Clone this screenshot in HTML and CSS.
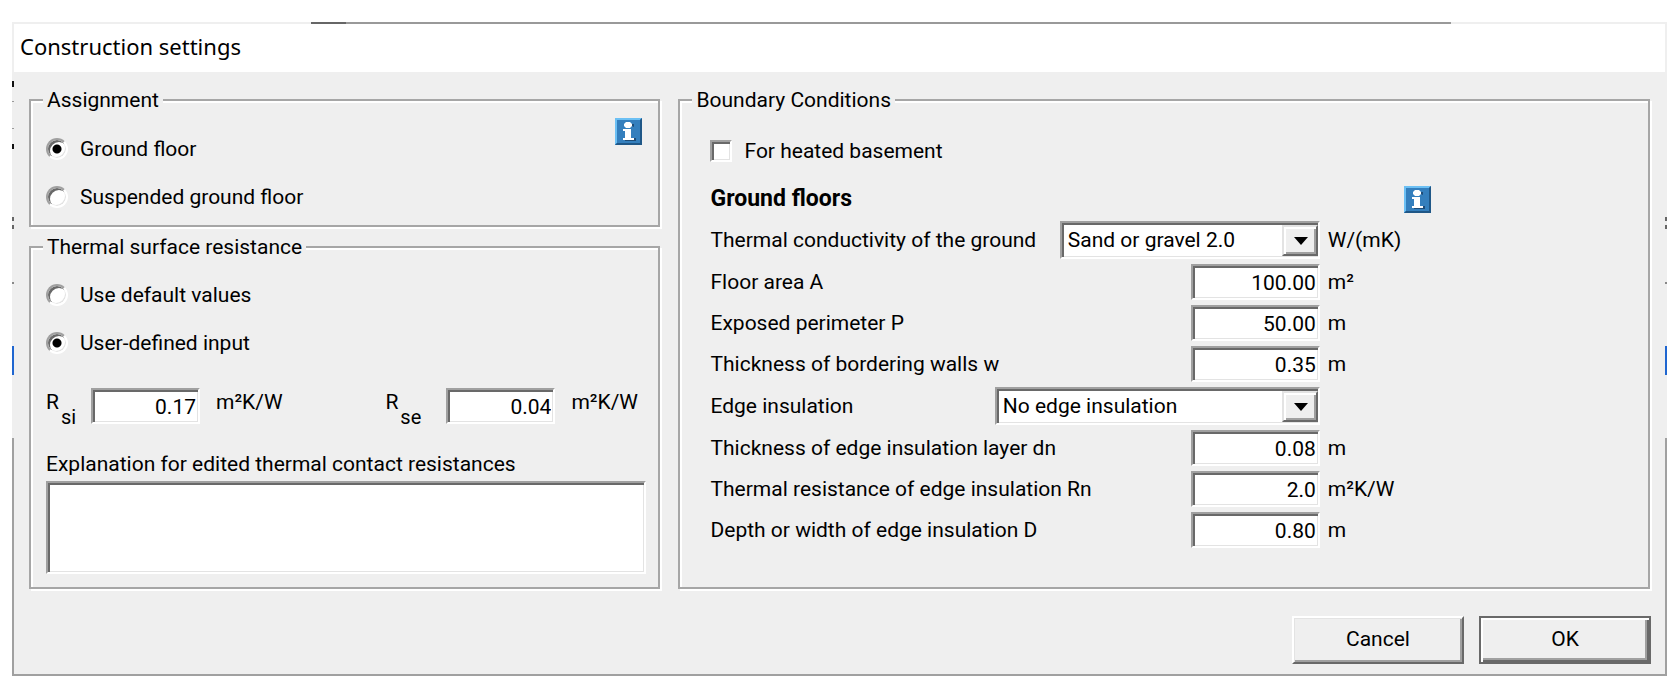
FILE: index.html
```html
<!DOCTYPE html>
<html lang="en">
<head>
  <meta charset="UTF-8">
  <meta name="viewport" content="width=device-width, initial-scale=1.0">
  <title>Construction settings</title>
  <link rel="stylesheet" href="styles.css">
</head>
<body>

  <!-- Shared info icon -->
  <svg class="sprite" width="0" height="0" aria-hidden="true">
    <symbol id="info" viewBox="0 0 27 27">
      <path d="M0 0h27v27H0z" fill="#347fbd"/>
      <path d="M0 0h27l-2 2H2v23l-2 2z" fill="#6cc0f4"/>
      <path d="M27 0v27H0l2-2h23V2z" fill="#1f5787"/>
      <path d="M11 8h6l2 1v-3h-2l-2 3zM18 12v8h3v3H10v-1h8z" fill="#1d4b76"/>
      <path d="M11 4h4l2 2v2l-2 2h-4l-2-2V6zM8 11h8v9h3v2H8v-2h2v-7H8z" fill="#fff"/>
    </symbol>
  </svg>

  <form class="window">
    <header class="titlebar">
      <h1>Construction settings</h1>
    </header>

    <main class="panels">
      <div class="column">

        <!-- Assignment -->
        <fieldset class="group">
          <legend>Assignment</legend>
          <div class="assignment">
            <div class="options">
              <label class="option"><input type="radio" name="assignment" checked>Ground floor</label>
              <label class="option"><input type="radio" name="assignment">Suspended ground floor</label>
            </div>
            <button type="button" class="info" aria-label="Info"><svg><use href="#info"/></svg></button>
          </div>
        </fieldset>

        <!-- Thermal surface resistance -->
        <fieldset class="group">
          <legend>Thermal surface resistance</legend>
          <div class="thermal">
            <div class="options">
              <label class="option"><input type="radio" name="resistance">Use default values</label>
              <label class="option"><input type="radio" name="resistance" checked>User-defined input</label>
            </div>
            <div class="resistances">
              <div class="resistance">
                <label for="rsi">R<sub>si</sub></label>
                <input type="text" class="field" id="rsi" value="0.17">
                <span>m²K/W</span>
              </div>
              <div class="resistance exterior">
                <label for="rse">R<sub>se</sub></label>
                <input type="text" class="field" id="rse" value="0.04">
                <span>m²K/W</span>
              </div>
            </div>
            <label class="explanation-label" for="explanation">Explanation for edited thermal contact resistances</label>
            <textarea class="field explanation" id="explanation"></textarea>
          </div>
        </fieldset>
      </div>

      <!-- Boundary conditions -->
      <fieldset class="group">
        <legend>Boundary Conditions</legend>
        <div class="boundary">
          <label class="option"><input type="checkbox">For heated basement</label>

          <div class="heading">
            <h2>Ground floors</h2>
            <button type="button" class="info" aria-label="Info"><svg><use href="#info"/></svg></button>
          </div>

          <div class="rows">
            <div class="row">
              <div class="main">
                <label for="conductivity">Thermal conductivity of the ground</label>
                <span class="select"><select class="field" id="conductivity"><option>Sand or gravel 2.0</option></select></span>
              </div>
              <span>W/(mK)</span>
            </div>
            <div class="row">
              <div class="main">
                <label for="area">Floor area A</label>
                <input type="text" class="field" id="area" value="100.00">
              </div>
              <span>m²</span>
            </div>
            <div class="row">
              <div class="main">
                <label for="perimeter">Exposed perimeter P</label>
                <input type="text" class="field" id="perimeter" value="50.00">
              </div>
              <span>m</span>
            </div>
            <div class="row">
              <div class="main">
                <label for="walls">Thickness of bordering walls w</label>
                <input type="text" class="field" id="walls" value="0.35">
              </div>
              <span>m</span>
            </div>
            <div class="row">
              <div class="main">
                <label for="edge">Edge insulation</label>
                <span class="select wide"><select class="field" id="edge"><option>No edge insulation</option></select></span>
              </div>
            </div>
            <div class="row">
              <div class="main">
                <label for="layer">Thickness of edge insulation layer dn</label>
                <input type="text" class="field" id="layer" value="0.08">
              </div>
              <span>m</span>
            </div>
            <div class="row">
              <div class="main">
                <label for="rn">Thermal resistance of edge insulation Rn</label>
                <input type="text" class="field" id="rn" value="2.0">
              </div>
              <span>m²K/W</span>
            </div>
            <div class="row">
              <div class="main">
                <label for="depth">Depth or width of edge insulation D</label>
                <input type="text" class="field" id="depth" value="0.80">
              </div>
              <span>m</span>
            </div>
          </div>
        </div>
      </fieldset>
    </main>

    <footer class="actions">
      <button type="button" class="btn">Cancel</button>
      <button type="submit" class="btn default">OK</button>
    </footer>
  </form>

</body>
</html>
```
FILE: styles.css
```css
* {
  box-sizing: border-box;
}

body {
  margin: 0;
  padding: 22px 13px 14px 12px;
  background: #fff;
  color: #000;
  font: 21px/28px Roboto, "Liberation Sans", sans-serif;
}

h1, h2 {
  margin: 0;
}

.sprite {
  position: absolute;
}

/* Dialog window, with bits of the application showing along its frame */
.window {
  padding: 2px;
  background:
    linear-gradient(#a0a0a0, #a0a0a0) left bottom / 100% 2px no-repeat,
    linear-gradient(#666, #666) 299px 0 / 35px 2px no-repeat,
    linear-gradient(#999, #999) 334px 0 / 1105px 2px no-repeat,
    linear-gradient(#111, #111) 0 59px / 2px 6px no-repeat,
    linear-gradient(#999, #999) 0 79px / 2px 1px no-repeat,
    linear-gradient(#999, #999) 0 106px / 2px 1px no-repeat,
    linear-gradient(#111, #111) 0 122px / 2px 5px no-repeat,
    linear-gradient(transparent 195px, #666 195px 199px, transparent 199px 203px, #666 203px 207px, transparent 207px 260px, #888 260px 262px, transparent 262px 324px, #1f66d0 324px 353px, transparent 353px 416px, #a0a0a0 416px) left top / 2px 100% no-repeat,
    linear-gradient(transparent 195px, #666 195px 199px, transparent 199px 203px, #666 203px 207px, transparent 207px 260px, #888 260px 262px, transparent 262px 324px, #1f66d0 324px 353px, transparent 353px 416px, #a0a0a0 416px) right top / 2px 100% no-repeat,
    #efefef;
}

.titlebar {
  padding: 8px 6px 12px;
  background: #fff;
}

.titlebar h1 {
  font: 22px/28px "Noto Sans", "Open Sans", sans-serif;
}

.panels {
  display: grid;
  grid-template-columns: 13fr 20fr;
  gap: 18px;
  padding: 14px 15px 0;
}

.column {
  display: flex;
  flex-direction: column;
  gap: 6px;
}

/* Group boxes */
.group {
  min-width: 0;
  margin: 0;
  padding: 0;
  border: 2px solid #a6a6a6;
  box-shadow: 2px 2px 0 #fff, inset 2px 2px 0 #fff;
}

.group legend {
  margin-left: 12px;
  padding: 0 4px;
  background: #efefef;
}

.assignment {
  display: flex;
  justify-content: space-between;
  padding: 4px 16px 14px 15px;
}

.assignment .options {
  padding-top: 17px;
}

.thermal {
  padding: 20px 12px 13px 15px;
}

.options {
  display: flex;
  flex-direction: column;
  gap: 20px;
}

.option {
  display: flex;
  align-items: center;
  gap: 12px;
}

/* Radio and check boxes */
.option input {
  appearance: none;
  flex: none;
  width: 22px;
  height: 22px;
  margin: 0;
  border: 2px solid;
  border-color: #a0a0a0 #fff #fff #a0a0a0;
  background: #fff;
  box-shadow: inset 2px 2px 0 #696969, inset -1px -1px 0 #e3e3e3;
}

.option input[type="radio"] {
  border-radius: 50%;
}

.option input[type="radio"]:checked {
  background: radial-gradient(circle, #000 4px, #fff 5px);
}

/* Sunken fields */
.field {
  min-width: 0;
  height: 36px;
  margin: 0;
  padding: 2px 2px 0;
  border: 2px solid;
  border-color: #a0a0a0 #fff #fff #a0a0a0;
  border-radius: 0;
  background: #fff;
  color: #000;
  font: inherit;
  box-shadow: inset 2px 2px 0 #696969, inset -1px -1px 0 #e3e3e3;
}

input.field {
  text-align: right;
}

.resistances {
  display: grid;
  grid-template-columns: 13fr 10fr;
  padding-top: 31px;
}

.resistance {
  display: flex;
}

.resistance label {
  width: 45px;
}

.resistance.exterior label {
  width: 61px;
}

.resistance sub {
  position: relative;
  top: 15px;
  padding-left: 2px;
  font-size: 20px;
  line-height: 0;
  vertical-align: baseline;
}

.resistance .field {
  width: 109px;
}

.resistance span {
  padding-left: 16px;
}

.explanation-label {
  display: block;
  padding: 26px 0 3px;
}

.explanation {
  display: block;
  width: 100%;
  height: 93px;
  resize: none;
}

.info {
  width: 27px;
  height: 27px;
  padding: 0;
  border: 0;
  background: none;
}

.info svg {
  display: block;
  width: 27px;
  height: 27px;
}

/* Boundary conditions form */
.boundary {
  padding: 23px 30px 34px;
}

.heading, .row {
  display: grid;
  grid-template-columns: 21fr 10fr;
  column-gap: 8px;
  align-items: center;
}

.heading {
  padding: 20px 0 8px;
}

.heading h2 {
  font-size: 23px;
  line-height: 28px;
}

.heading .info {
  margin-left: 76px;
}

.rows {
  display: flex;
  flex-direction: column;
  gap: 5px;
}

.main {
  display: flex;
  align-items: center;
  justify-content: space-between;
}

.main input.field {
  width: 129px;
}

.select {
  position: relative;
  width: 260px;
}

.select.wide {
  width: 325px;
}

.select select {
  appearance: none;
  display: block;
  width: 100%;
  height: 38px;
  padding: 0 36px 0 6px;
}

/* Drop-down button: raised face, then the arrow */
.select::before {
  content: "";
  position: absolute;
  top: 4px;
  right: 2px;
  bottom: 3px;
  width: 32px;
  border: 2px solid;
  border-color: #e3e3e3 #696969 #696969 #e3e3e3;
  background: #efefef;
  box-shadow: inset 2px 2px 0 #fff, inset -2px -2px 0 #a0a0a0;
  pointer-events: none;
}

.select::after {
  content: "";
  position: absolute;
  top: 16px;
  right: 12px;
  border: 7px solid transparent;
  border-top: 8px solid #000;
  border-bottom: 0;
  pointer-events: none;
}

/* Buttons */
.actions {
  display: flex;
  justify-content: flex-end;
  gap: 15px;
  padding: 27px 14px 10px;
}

.btn {
  width: 172px;
  height: 48px;
  padding: 0 0 2px;
  border: 2px solid;
  border-color: #fff #696969 #696969 #fff;
  background: #efefef;
  color: #000;
  font: inherit;
  box-shadow: inset 1px 1px 0 #e3e3e3, inset -2px -2px 0 #a0a0a0;
}

.btn.default {
  border-color: #696969;
  box-shadow: inset 2px 2px 0 #fff, inset -2px -2px 0 #696969, inset -4px -4px 0 #a0a0a0;
}
```
